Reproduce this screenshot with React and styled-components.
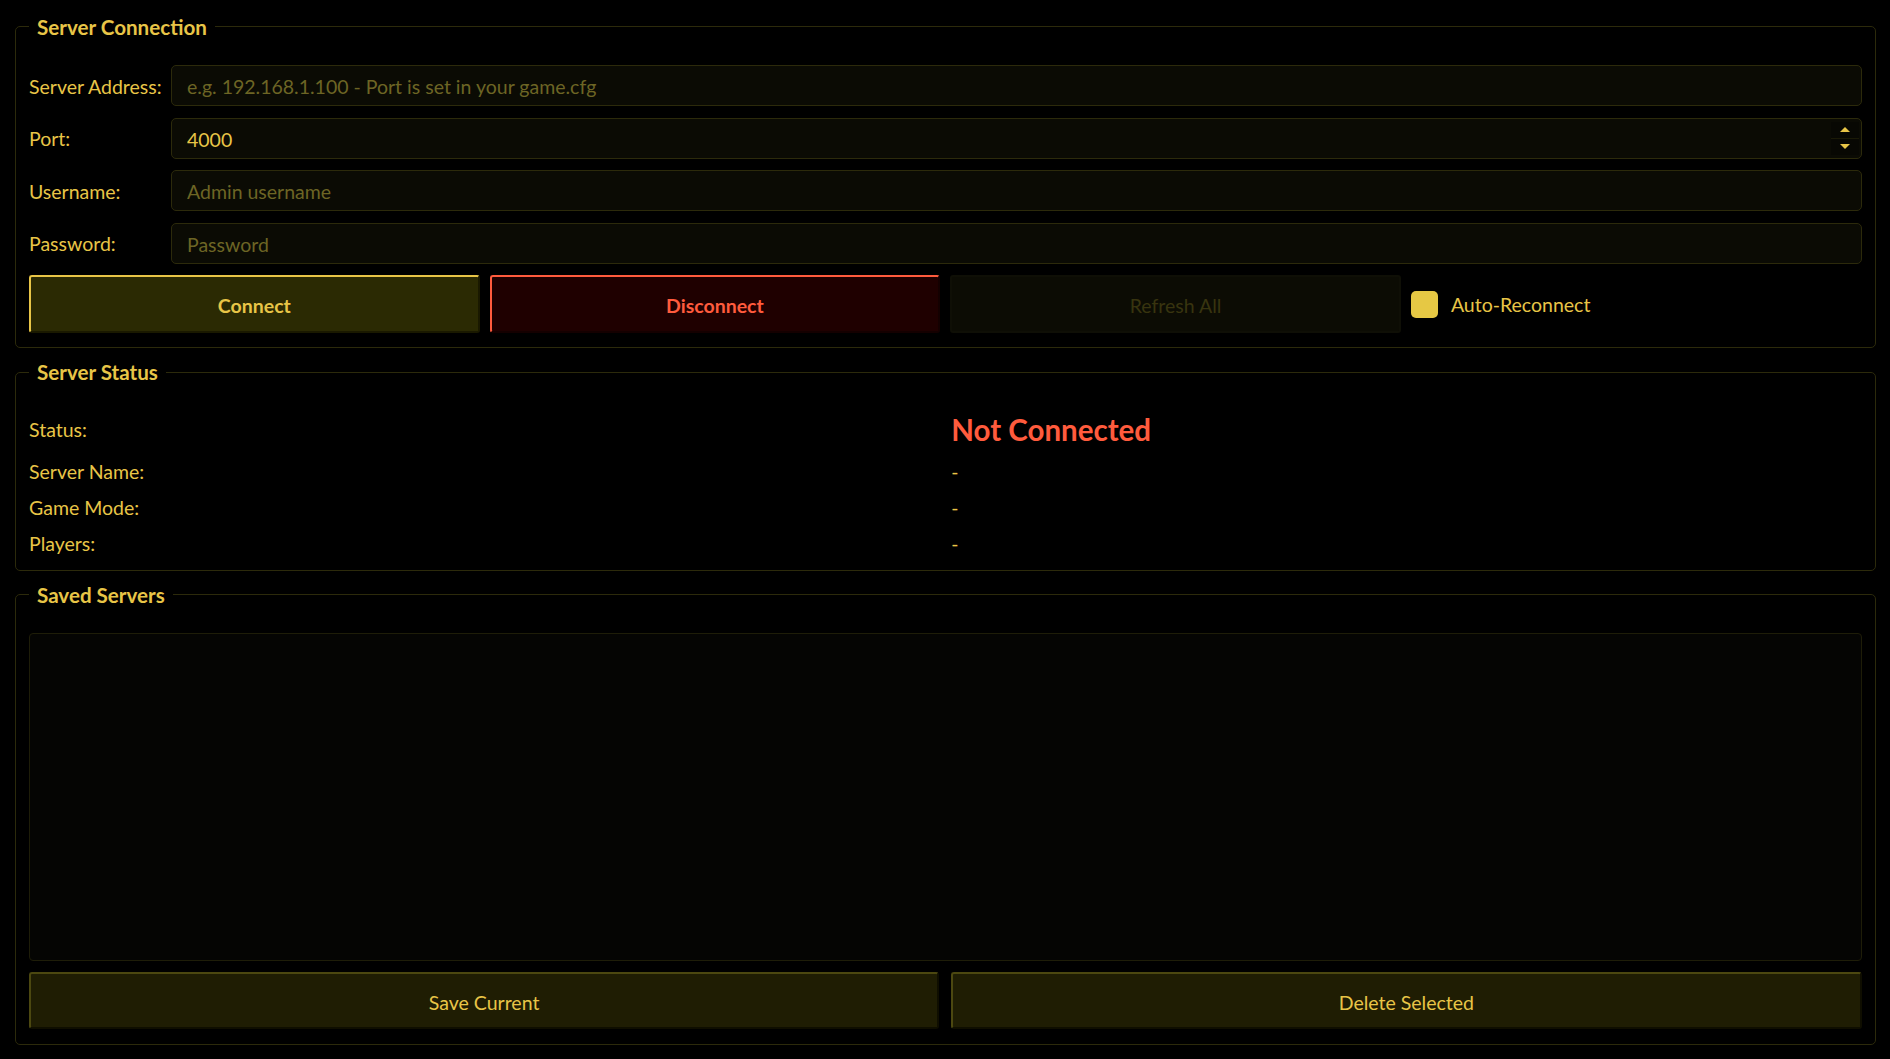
import React from 'react';
import styled, { createGlobalStyle, css } from 'styled-components';

const YELLOW = '#e8c547';
const RED = '#ff5b3d';
const LINE = '#2c2a0b';

const Global = createGlobalStyle`
  html, body { margin: 0; padding: 0; background: #000; }
  body {
    font-family: Lato, "Open Sans", sans-serif;
    color: ${YELLOW};
  }
  * { box-sizing: border-box; }
`;

const Page = styled.div`
  height: 1059px;
  padding: 14.5px 14px 14px 14.5px;
  display: flex;
  flex-direction: column;
  gap: 12px;
`;

const Group = styled.fieldset`
  margin: 0;
  min-inline-size: 0;
  border: 1px solid ${LINE};
  border-radius: 5px;
  padding: ${(p) => p.$pt}px 13.5px ${(p) => p.$pb}px;
  display: flex;
  flex-direction: column;
  gap: ${(p) => p.$gap || 0}px;
  ${(p) => p.$grow && css`flex: 1; min-height: 0;`}
`;

const Legend = styled.legend`
  padding: 0 8px;
  font-size: 20.6px;
  line-height: 24px;
  font-weight: 700;
  color: ${YELLOW};
`;

const FormGrid = styled.div`
  display: grid;
  grid-template-columns: 132px 1fr;
  grid-auto-rows: 41px;
  column-gap: 10px;
  row-gap: 11.5px;
  align-items: center;
`;

const Label = styled.label`
  font-size: 19.5px;
  padding-top: 1px;
  color: ${YELLOW};
  white-space: nowrap;
`;

const Field = styled.div`
  height: 41px;
  display: flex;
  align-items: stretch;
  background: #0b0b04;
  border: 1px solid ${LINE};
  border-radius: 5px;
  overflow: hidden;
`;

const TextInput = styled.input`
  flex: 1;
  min-width: 0;
  border: 0;
  outline: none;
  background: transparent;
  padding: 2px 15px 0;
  font-family: Lato, "Open Sans", sans-serif;
  font-size: 19.5px;
  color: ${YELLOW};
  &::placeholder { color: #6d6524; opacity: 1; }
`;

const Spinner = styled.div`
  width: 28px;
  margin: 3px 2px 3px 0;
  display: flex;
  flex-direction: column;
  background: #080803;
`;

const SpinHalf = styled.div`
  flex: 1;
  display: flex;
  align-items: center;
  justify-content: center;
  & + & { border-top: 1px solid #1a1906; }
`;

const Arrow = styled.span`
  width: 0;
  height: 0;
  border-left: 5px solid transparent;
  border-right: 5px solid transparent;
  ${(p) =>
    p.$up
      ? css`border-bottom: 5px solid ${YELLOW};`
      : css`border-top: 5px solid ${YELLOW};`}
`;

const ActionRow = styled.div`
  display: grid;
  grid-template-columns: repeat(4, 1fr);
  gap: 10px;
  height: 58px;
`;

const variants = {
  connect: css`
    background: #2b2a03;
    border-color: ${YELLOW} #1a1900 #1a1900 ${YELLOW};
    color: ${YELLOW};
    font-weight: 700;
  `,
  disconnect: css`
    background: #1f0000;
    border-color: ${RED} #140000 #140000 ${RED};
    color: ${RED};
    font-weight: 700;
  `,
  disabled: css`
    background: #0c0c04;
    border-color: #0f0f06;
    color: #38340f;
    font-weight: 400;
  `,
  plain: css`
    background: #1f1d03;
    border-color: #4c4810 #0f0e00 #0f0e00 #4c4810;
    color: ${YELLOW};
    font-weight: 400;
  `,
};

const Button = styled.button`
  height: ${(p) => p.$h || 58}px;
  border: 2px solid;
  border-radius: 3px;
  padding-top: 4px;
  font-family: Lato, "Open Sans", sans-serif;
  font-size: 19.5px;
  cursor: pointer;
  ${(p) => variants[p.$variant]}
`;

const CheckWrap = styled.label`
  display: flex;
  align-items: center;
  gap: 13px;
  font-size: 19.5px;
  color: ${YELLOW};
`;

const CheckBox = styled.span`
  width: 27px;
  height: 27px;
  border-radius: 5px;
  background: #e6c844;
  flex: none;
`;

const StatusGrid = styled.div`
  display: grid;
  grid-template-columns: 1fr 1fr;
  column-gap: 12px;
  grid-template-rows: 48px 36px 36px 36px;
  align-items: center;
`;

const StatusLabel = styled.div`
  font-size: 19.5px;
  color: ${YELLOW};
`;

const StatusValue = styled.div`
  font-size: ${(p) => (p.$big ? 29.5 : 19.5)}px;
  font-weight: ${(p) => (p.$big ? 700 : 400)};
  color: ${(p) => (p.$big ? RED : YELLOW)};
`;

const ServerList = styled.div`
  flex: 1;
  min-height: 0;
  background: #050503;
  border: 1px solid #1e1d08;
  border-radius: 4px;
`;

const TwoCol = styled.div`
  display: grid;
  grid-template-columns: 1fr 1fr;
  gap: 12px;
`;

export default function App() {
  return (
    <>
      <Global />
      <Page>
        <Group $pt={26.5} $pb={14} $gap={11.5}>
          <Legend>Server Connection</Legend>
          <FormGrid>
            <Label>Server Address:</Label>
            <Field>
              <TextInput placeholder="e.g. 192.168.1.100 - Port is set in your game.cfg" />
            </Field>
            <Label>Port:</Label>
            <Field>
              <TextInput defaultValue="4000" />
              <Spinner>
                <SpinHalf><Arrow $up /></SpinHalf>
                <SpinHalf><Arrow /></SpinHalf>
              </Spinner>
            </Field>
            <Label>Username:</Label>
            <Field>
              <TextInput placeholder="Admin username" />
            </Field>
            <Label>Password:</Label>
            <Field>
              <TextInput type="password" placeholder="Password" />
            </Field>
          </FormGrid>
          <ActionRow>
            <Button $variant="connect">Connect</Button>
            <Button $variant="disconnect">Disconnect</Button>
            <Button $variant="disabled" disabled>Refresh All</Button>
            <CheckWrap>
              <CheckBox />
              Auto-Reconnect
            </CheckWrap>
          </ActionRow>
        </Group>

        <Group $pt={21.5} $pb={8}>
          <Legend>Server Status</Legend>
          <StatusGrid>
            <StatusLabel>Status:</StatusLabel>
            <StatusValue $big>Not Connected</StatusValue>
            <StatusLabel>Server Name:</StatusLabel>
            <StatusValue>-</StatusValue>
            <StatusLabel>Game Mode:</StatusLabel>
            <StatusValue>-</StatusValue>
            <StatusLabel>Players:</StatusLabel>
            <StatusValue>-</StatusValue>
          </StatusGrid>
        </Group>

        <Group $pt={26.5} $pb={15} $gap={11} $grow>
          <Legend>Saved Servers</Legend>
          <ServerList />
          <TwoCol>
            <Button $variant="plain" $h={57}>Save Current</Button>
            <Button $variant="plain" $h={57}>Delete Selected</Button>
          </TwoCol>
        </Group>
      </Page>
    </>
  );
}
